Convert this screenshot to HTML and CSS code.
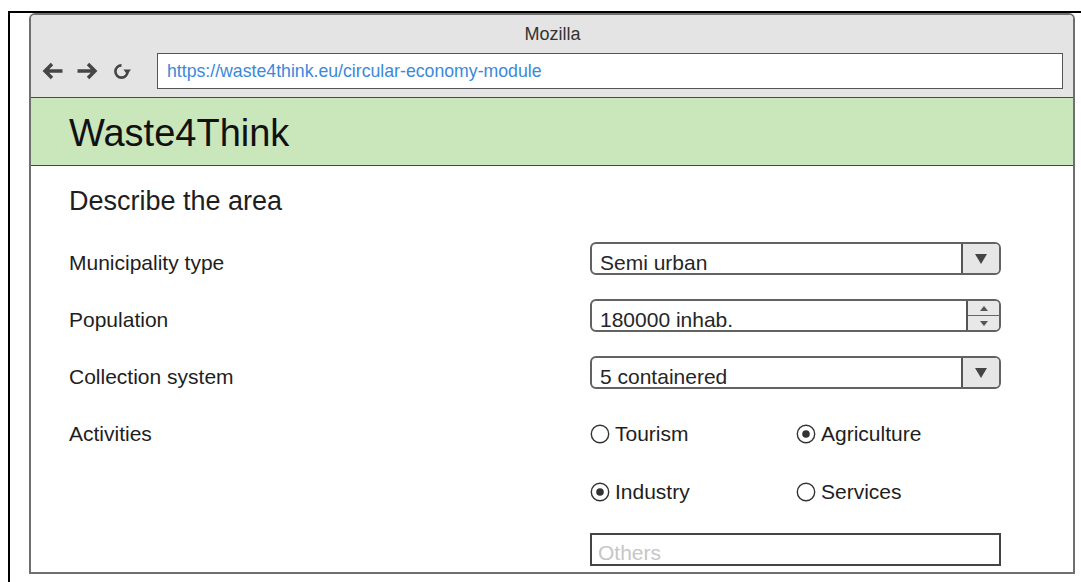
FILE: index.html
```html
<!DOCTYPE html>
<html lang="en">
<head>
<meta charset="utf-8">
<title>Waste4Think – Circular economy module</title>
<link rel="stylesheet" href="styles.css">
</head>
<body>
<div class="frame">
  <div class="window">
    <div class="chrome">
      <div class="title">Mozilla</div>
      <div class="navrow">
        <div class="navbtns">
          <svg class="ico-arrow" width="21" height="18" viewBox="0 0 21 18" aria-hidden="true">
            <path d="M20.5 9H3.5M10 2L3 9l7 7" fill="none" stroke="#454545" stroke-width="3.4"/>
          </svg>
          <svg class="ico-arrow" width="23" height="18" viewBox="0 0 23 18" aria-hidden="true">
            <path d="M0.5 9h17M11 2l7 7-7 7" fill="none" stroke="#454545" stroke-width="3.4"/>
          </svg>
          <svg class="ico-reload" width="19" height="19" viewBox="0 0 19 19" aria-hidden="true">
            <path d="M9.5 3.4A6.1 6.1 0 1 0 15.6 9.5" fill="none" stroke="#454545" stroke-width="2.6"/>
            <path d="M11.4 7.6h7.6l-3.8 4.8z" fill="#454545"/>
          </svg>
        </div>
        <div class="url">https://waste4think.eu/circular-economy-module</div>
      </div>
    </div>

    <header class="brand">
      <h1>Waste4Think</h1>
    </header>

    <main class="content">
      <h2>Describe the area</h2>
      <div class="form">
        <div class="label">Municipality type</div>
        <div class="select">
          <span class="value">Semi urban</span>
          <span class="drop">
            <svg width="12" height="10" viewBox="0 0 12 10" aria-hidden="true"><path d="M0 0h12L6 10z" fill="#444"/></svg>
          </span>
        </div>

        <div class="label">Population</div>
        <div class="select spin">
          <span class="value">180000 inhab.</span>
          <span class="stepper">
            <span class="step"><svg width="8" height="5" viewBox="0 0 8 5" aria-hidden="true"><path d="M0 5h8L4 0z" fill="#555"/></svg></span>
            <span class="step"><svg width="8" height="5" viewBox="0 0 8 5" aria-hidden="true"><path d="M0 0h8L4 5z" fill="#555"/></svg></span>
          </span>
        </div>

        <div class="label">Collection system</div>
        <div class="select">
          <span class="value">5 containered</span>
          <span class="drop">
            <svg width="12" height="10" viewBox="0 0 12 10" aria-hidden="true"><path d="M0 0h12L6 10z" fill="#444"/></svg>
          </span>
        </div>

        <div class="label">Activities</div>
        <div class="activities">
          <div class="radios">
            <div class="radio">
              <svg width="20" height="20" viewBox="0 0 20 20" aria-hidden="true"><circle cx="10" cy="10" r="8.7" fill="#fff" stroke="#333" stroke-width="1.4"/></svg>
              <span>Tourism</span>
            </div>
            <div class="radio">
              <svg width="20" height="20" viewBox="0 0 20 20" aria-hidden="true"><circle cx="10" cy="10" r="8.7" fill="#fff" stroke="#333" stroke-width="1.4"/><circle cx="10" cy="10" r="3.8" fill="#333"/></svg>
              <span>Agriculture</span>
            </div>
            <div class="radio">
              <svg width="20" height="20" viewBox="0 0 20 20" aria-hidden="true"><circle cx="10" cy="10" r="8.7" fill="#fff" stroke="#333" stroke-width="1.4"/><circle cx="10" cy="10" r="3.8" fill="#333"/></svg>
              <span>Industry</span>
            </div>
            <div class="radio">
              <svg width="20" height="20" viewBox="0 0 20 20" aria-hidden="true"><circle cx="10" cy="10" r="8.7" fill="#fff" stroke="#333" stroke-width="1.4"/></svg>
              <span>Services</span>
            </div>
          </div>
          <div class="others">Others</div>
        </div>
      </div>
    </main>
  </div>
</div>
</body>
</html>
```

FILE: styles.css
```css
html, body {
  margin: 0;
  padding: 0;
  background: #fff;
  overflow: hidden;
}

body {
  font-family: "Liberation Sans", Arial, Helvetica, sans-serif;
  color: #1e1e1e;
}

/* black outer frame: left and top edges only */
.frame {
  margin: 11px 0 0 8px;
  border-left: 2px solid #000;
  border-top: 2px solid #000;
  padding-left: 19px;
  height: 600px;
  box-sizing: border-box;
}

/* browser window */
.window {
  width: 1046px;
  height: 561px;
  box-sizing: border-box;
  border: 2px solid #6f6f6f;
  border-radius: 6px 6px 0 0;
  overflow: hidden;
  background: #fff;
  display: flex;
  flex-direction: column;
}

.chrome {
  background: #e4e4e4;
  border-bottom: 1px solid #4a4a4a;
  padding: 4px 10px 8px 11px;
}

.title {
  text-align: center;
  font-size: 18px;
  line-height: 30px;
  color: #333;
}

.navrow {
  margin-top: 4px;
  display: flex;
  align-items: center;
  gap: 11px;
}

.navbtns {
  display: flex;
  align-items: center;
  width: 104px;
}

.navbtns svg {
  display: block;
}

.ico-arrow {
  margin-right: 14px;
}

.ico-arrow + .ico-arrow {
  margin-right: 12px;
}

.url {
  flex: 1;
  height: 36px;
  box-sizing: border-box;
  border: 1px solid #555;
  background: #fff;
  padding-left: 9px;
  font-size: 17.7px;
  line-height: 34px;
  color: #3b88dc;
  white-space: nowrap;
}

/* green site header */
.brand {
  background: #cae6bb;
  border-bottom: 1px solid #444;
  height: 68px;
  box-sizing: border-box;
  padding: 3px 0 0 38px;
}

.brand h1 {
  margin: 0;
  font-weight: normal;
  font-size: 38px;
  line-height: 65px;
  color: #111;
}

.content {
  flex: 1;
  padding-left: 38px;
}

.content h2 {
  margin: 20px 0 0;
  font-weight: normal;
  font-size: 27px;
  line-height: 30px;
  color: #1e1e1e;
}

.form {
  margin-top: 26px;
  display: grid;
  grid-template-columns: 521px 411px;
  row-gap: 24px;
  align-items: start;
}

.label {
  font-size: 21px;
  line-height: 22px;
  padding-top: 10px;
  color: #1e1e1e;
}

/* dropdown / number field */
.select {
  height: 33px;
  box-sizing: border-box;
  border: 2px solid #626262;
  border-radius: 6px;
  overflow: hidden;
  display: flex;
  background: #fff;
}

.select .value {
  flex: 1;
  padding: 8px 0 0 8px;
  font-size: 21px;
  line-height: 22px;
  color: #262626;
  white-space: nowrap;
}

.drop {
  width: 36px;
  border-left: 2px solid #555;
  background: #e6e6e6;
  display: flex;
  align-items: center;
  justify-content: center;
}

.drop svg {
  display: block;
}

.stepper {
  width: 31px;
  border-left: 2px solid #555;
  background: #e8e8e8;
  display: flex;
  flex-direction: column;
}

.step {
  flex: 1;
  display: flex;
  align-items: center;
  justify-content: center;
}

.step + .step {
  border-top: 1.5px solid #666;
}

.step svg {
  display: block;
}

/* activity radios */
.radios {
  display: grid;
  grid-template-columns: 206px 206px;
  row-gap: 25px;
}

.radio {
  height: 33px;
  box-sizing: border-box;
  padding-top: 10px;
  display: flex;
  align-items: flex-start;
  font-size: 21px;
  line-height: 22px;
  color: #1e1e1e;
}

.radio svg {
  display: block;
  margin: 1px 5px 0 0;
  flex: none;
}

.others {
  margin-top: 29px;
  height: 33px;
  box-sizing: border-box;
  border: 2px solid #444;
  padding: 7px 0 0 6px;
  font-size: 21px;
  line-height: 22px;
  color: #c6c6c6;
}
```
